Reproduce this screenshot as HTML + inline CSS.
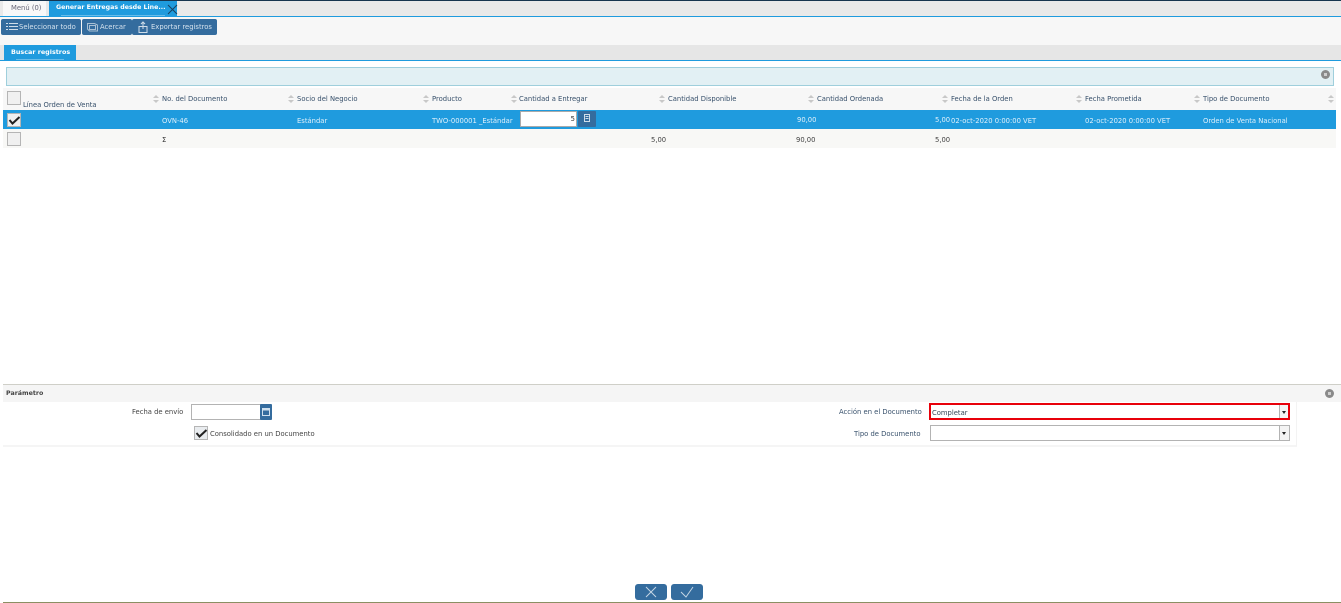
<!DOCTYPE html>
<html lang="es"><head><meta charset="utf-8"><title>Generar Entregas</title>
<style>
html,body{margin:0;padding:0;background:#fff}
body{width:1341px;height:603px;overflow:hidden;position:relative;font-family:"DejaVu Sans","Liberation Sans",sans-serif;font-size:6.8px;color:#333}
.a{position:absolute}
.t{position:absolute;white-space:nowrap;line-height:10px;font-size:6.8px;color:#444}
.w{color:#dff0fb}
.btn{position:absolute;top:19px;height:16px;background:#346c9e;border-radius:2px;color:#d5e2ee;line-height:16px;white-space:nowrap;font-size:6.8px}
.h{color:#37506b}
.cb{position:absolute;width:12px;height:12px;background:#f0f0f0;border:1px solid #b5b5b5}
.s{position:absolute;width:6px;height:9px}
.s:before,.s:after{content:"";position:absolute;left:0;border-left:3px solid transparent;border-right:3px solid transparent}
.s:before{top:0;border-bottom:3.5px solid #c8c8c8}
.s:after{top:5px;border-top:3.5px solid #c8c8c8}
.in{position:absolute;background:#fff;border:1px solid #b3b3b3;box-sizing:border-box}
.dd{position:absolute;right:0;top:0;bottom:0;width:9px;border-left:1px solid #b3b3b3;background:#f4f4f4}
.dd:after{content:"";position:absolute;left:2px;top:6px;border-left:2.5px solid transparent;border-right:2.5px solid transparent;border-top:3px solid #222}
.x{position:absolute;width:9px;height:9px;border-radius:50%;background:#8a8a8a}
.x:after{content:"";position:absolute;left:3px;top:3px;width:3px;height:3px;background:#cfcfcf}
</style></head><body>
<div class="a" style="left:0;top:0;width:1341px;height:1px;background:#17354f"></div>
<div class="a" style="left:0;top:1px;width:1341px;height:15px;background:#e9e9e9"></div>
<div class="a" style="left:3px;top:1px;width:43px;height:15px;background:#f8f8f8"></div>
<div class="t" style="left:11px;top:3px;color:#667">Menú (0)</div>
<div class="a" style="left:49px;top:1px;width:128px;height:15px;background:#1f9bde"></div>
<div class="t" style="left:56px;top:3px;color:#fff;font-weight:bold;font-size:6.25px">Generar Entregas desde Line...</div>
<div class="a" style="left:61px;top:15px;width:104px;height:1px;background:#69bce9"></div>
<svg class="a" style="left:167px;top:4px" width="12" height="12"><path d="M1 1L10 10M10 1L1 10" stroke="#17405f" stroke-width="1" fill="none"/></svg>
<div class="a" style="left:0;top:16px;width:1341px;height:1px;background:#1f9bde"></div>
<div class="a" style="left:0;top:17px;width:1341px;height:28px;background:#f7f7f7"></div>

<div class="btn" style="left:1px;width:80px"><span style="position:absolute;left:18px">Seleccionar todo</span>
<svg class="a" style="left:5px;top:3px" width="12" height="10"><path d="M0 1.5h2M3 1.5h9M0 4.5h2M3 4.5h9M0 7.5h2M3 7.5h9" stroke="#cfdde9" stroke-width="1"/></svg></div>
<div class="btn" style="left:82px;width:50px"><span style="position:absolute;left:18px">Acercar</span>
<svg class="a" style="left:5px;top:3px" width="12" height="10"><path d="M.5 1.5h7l3 1.5v6h-8l-2-2zM2.5 3.5h6v4h-6z" stroke="#a9c0d4" fill="none"/></svg></div>
<div class="btn" style="left:132px;width:85px"><span style="position:absolute;left:19px">Exportar registros</span>
<svg class="a" style="left:6px;top:2px" width="10" height="12"><path d="M1 5.5h8v6H1zM5 8V1M3 3l2-2 2 2" stroke="#cfdde9" fill="none"/></svg></div>

<div class="a" style="left:0;top:45px;width:1341px;height:15px;background:#e6e6e6"></div>
<div class="a" style="left:4px;top:45px;width:72px;height:15px;background:#1f9bde"></div>
<div class="t" style="left:11px;top:47px;color:#fff;font-weight:bold;font-size:6.4px">Buscar registros</div>
<div class="a" style="left:16px;top:59px;width:48px;height:1px;background:#69bce9"></div>
<div class="a" style="left:0;top:60px;width:1341px;height:1px;background:#1f9bde"></div>

<div class="a" style="left:6px;top:67px;width:1326px;height:17px;background:#e2f0f4;border:1px solid #9fcfdc"></div>
<div class="x" style="left:1321px;top:70px"></div>

<div class="a" style="left:3px;top:88px;width:1333px;height:22px;background:#f7f7f7"></div>
<div class="a" style="left:3px;top:110px;width:1333px;height:19px;background:#1f9bde"></div>
<div class="a" style="left:3px;top:129px;width:1333px;height:19px;background:#f8f8f6"></div>

<div class="cb" style="left:7px;top:91px"></div>
<div class="t h" style="left:23px;top:100px">Línea Orden de Venta</div>
<div class="s" style="left:153px;top:95px"></div><div class="t h" style="left:162px;top:94px">No. del Documento</div>
<div class="s" style="left:288px;top:95px"></div><div class="t h" style="left:297px;top:94px">Socio del Negocio</div>
<div class="s" style="left:423px;top:95px"></div><div class="t h" style="left:432px;top:94px">Producto</div>
<div class="s" style="left:511px;top:95px"></div><div class="t h" style="left:519px;top:94px">Cantidad a Entregar</div>
<div class="s" style="left:659px;top:95px"></div><div class="t h" style="left:668px;top:94px">Cantidad Disponible</div>
<div class="s" style="left:808px;top:95px"></div><div class="t h" style="left:817px;top:94px">Cantidad Ordenada</div>
<div class="s" style="left:942px;top:95px"></div><div class="t h" style="left:951px;top:94px">Fecha de la Orden</div>
<div class="s" style="left:1076px;top:95px"></div><div class="t h" style="left:1085px;top:94px">Fecha Prometida</div>
<div class="s" style="left:1194px;top:95px"></div><div class="t h" style="left:1203px;top:94px">Tipo de Documento</div>
<div class="s" style="left:1328px;top:95px"></div>

<div class="cb" style="left:7px;top:113px"></div>
<svg class="a" style="left:7px;top:113px" width="14" height="14"><path d="M2.5 7l3 3.5 7-6.5" stroke="#222" stroke-width="2" fill="none"/></svg>
<div class="t w" style="left:162px;top:116px">OVN-46</div>
<div class="t w" style="left:297px;top:116px">Estándar</div>
<div class="t w" style="left:432px;top:116px">TWO-000001 _Estándar</div>
<div class="in" style="left:520px;top:111px;width:57px;height:16px;border-color:#aaa"><span class="t" style="right:1px;top:2px;color:#333">5</span></div>
<div class="a" style="left:578px;top:111px;width:18px;height:16px;background:#346c9e;border-radius:1px"></div>
<svg class="a" style="left:583px;top:114px" width="8" height="9"><path d="M1.5.5h5v7h-5z" stroke="#cfdde9" fill="none"/><path d="M2.5 2.5h3M2.5 4.5h3" stroke="#cfdde9"/></svg>
<div class="t w" style="left:797px;top:115px">90,00</div>
<div class="t w" style="left:935px;top:115px">5,00</div>
<div class="t w" style="left:951px;top:116px">02-oct-2020 0:00:00 VET</div>
<div class="t w" style="left:1085px;top:116px">02-oct-2020 0:00:00 VET</div>
<div class="t w" style="left:1203px;top:116px">Orden de Venta Nacional</div>

<div class="cb" style="left:7px;top:132px"></div>
<div class="t" style="left:162px;top:135px;color:#333">Σ</div>
<div class="t" style="left:651px;top:135px">5,00</div>
<div class="t" style="left:796px;top:135px">90,00</div>
<div class="t" style="left:935px;top:135px">5,00</div>

<div class="a" style="left:3px;top:384px;width:1338px;height:1px;background:#cfcfc8"></div>
<div class="a" style="left:3px;top:385px;width:1338px;height:17px;background:#f5f5f5"></div>
<div class="t" style="left:6px;top:389px;font-weight:bold;font-size:6.3px;color:#444">Parámetro</div>
<div class="x" style="left:1325px;top:389px"></div>

<div class="t" style="left:132px;top:407px">Fecha de envío</div>
<div class="in" style="left:191px;top:404px;width:70px;height:16px"></div>
<div class="a" style="left:260px;top:404px;width:12px;height:16px;background:#346c9e;border-radius:1px"></div>
<svg class="a" style="left:261px;top:406px" width="10" height="11"><path d="M1.5 2.5h7v7h-7z" stroke="#cfe0ee" fill="none"/><path d="M1.5 3.5h7" stroke="#cfe0ee" stroke-width="2"/></svg>
<div class="cb" style="left:194px;top:426px;background:#e9ecef"></div>
<svg class="a" style="left:194px;top:426px" width="14" height="14"><path d="M2.5 7l3 3.5 7-6.5" stroke="#222" stroke-width="2" fill="none"/></svg>
<div class="t" style="left:210px;top:429px">Consolidado en un Documento</div>

<div class="t h" style="left:839px;top:407px">Acción en el Documento</div>
<div class="in" style="left:929px;top:403px;width:361px;height:17px;border:2px solid #e8000a"><span class="t" style="left:1px;top:3px;color:#345">Completar</span><div class="dd" style="top:0;bottom:0;width:8px"></div></div>
<div class="t h" style="left:854px;top:429px">Tipo de Documento</div>
<div class="in" style="left:930px;top:425px;width:360px;height:16px"><div class="dd"></div></div>
<div class="a" style="left:3px;top:445px;width:1294px;height:2px;background:#f5f5f5"></div>
<div class="a" style="left:1296px;top:402px;width:1px;height:44px;background:#f3f3f3"></div>

<div class="a" style="left:635px;top:584px;width:32px;height:16px;background:#346c9e;border-radius:3px"></div>
<svg class="a" style="left:635px;top:584px" width="32" height="16"><path d="M11 3l10 10M21 3L11 13" stroke="#c5d6e5" fill="none"/></svg>
<div class="a" style="left:671px;top:584px;width:32px;height:16px;background:#346c9e;border-radius:3px"></div>
<svg class="a" style="left:671px;top:584px" width="32" height="16"><path d="M10 8l5 5 7-10" stroke="#c5d6e5" fill="none"/></svg>
<div class="a" style="left:3px;top:602px;width:1338px;height:1px;background:#8b8f63"></div>
</body></html>
